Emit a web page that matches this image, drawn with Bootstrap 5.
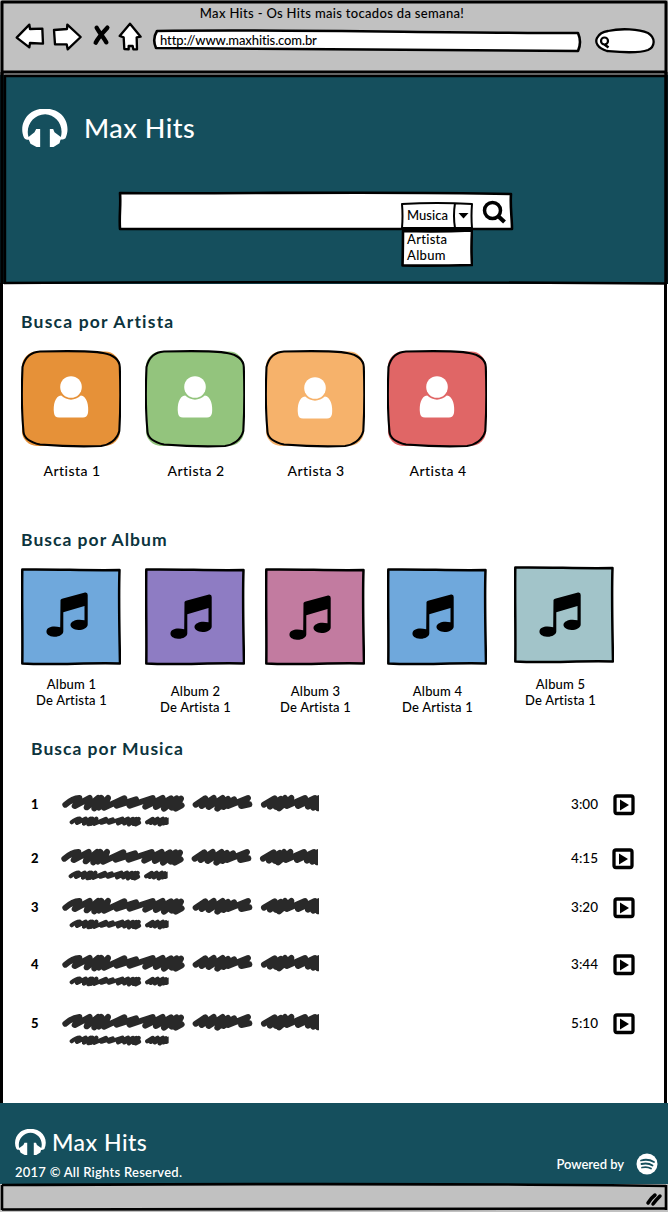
<!DOCTYPE html>
<html lang="pt-br">
<head>
<meta charset="utf-8">
<title>Max Hits</title>
<meta name="viewport" content="width=device-width, initial-scale=1">
<link href="https://cdn.jsdelivr.net/npm/bootstrap@5.3.0/dist/css/bootstrap.min.css" rel="stylesheet">
<style>
body{font-family:Lato,"Open Sans",sans-serif;color:#000;font-size:13px;line-height:16px;font-weight:500;background:#fff}
svg{display:block;flex:none}
.browser{width:668px;height:1212px;overflow:hidden}
.sketch{position:absolute;inset:0;fill:none;stroke:#000;stroke-width:2.6;stroke-linejoin:round;pointer-events:none}
.topbar{height:75px;background:#c1c1c1}
.topbar .caption{height:20px;padding-top:5px;padding-right:4px;letter-spacing:.32px}
.tools{padding-left:14px}
.address{width:430px;height:24px;margin:9px 0 0 8px;padding:3px 0 0 8px;letter-spacing:-.12px}
.address span,.picker span,.options span{position:relative}
.quick{margin:8px 0 0 12px}
.hero{height:209px;background:#154f5d;color:#fff;padding:34px 0 0 22px}
.brand{font-size:27px;line-height:38px;letter-spacing:.5px}
.search{width:396px;height:40px;margin:44px 0 0 96px;padding-left:283px;color:#000}
.picker{width:72px;height:28px;margin-top:11px;padding:5px 0 0 6px;letter-spacing:.05px}
.options{position:absolute;left:283px;top:38px;width:72px;height:38px;padding:2px 0 0 6px;letter-spacing:.3px}
.glass{margin:9px 0 0 9px}
.title{color:#0c343d;font-size:17.5px;line-height:22px;font-weight:700;letter-spacing:1.2px;margin:0}
.albums .title,.songs .title{letter-spacing:1.02px}
.artists{padding:27px 0 0 21px;height:218px}
.albums{padding:27px 0 0 21px;height:210px}
.tile{width:100px;text-align:center}
.tiles{margin-top:17px}
.artists .tile div{font-size:14px;letter-spacing:.45px;padding-left:2px;margin-top:15px}
.albums .tile div{letter-spacing:.18px;margin-top:10px;padding-left:1px}
.albums .tile .low{margin-top:17px}
.g20{margin-left:20px}.g22{margin-left:22px}.g24{margin-left:24px}.g27{margin-left:27px}
.songs{padding:26px 0 0 31px;height:391px;position:relative}
.song{width:604px;height:32px;letter-spacing:.05px}
.song .num{width:31px;font-weight:900;font-size:13px;padding-top:2px}
.song .time{width:42px;margin-left:251px;font-size:13.5px;padding-top:2px}
.footer-bar{height:81px;background:#154f5d;color:#fff;padding:0 10px 0 15px}
.footer-bar .brand{font-size:23px;line-height:28px;letter-spacing:.5px;margin-left:6px}
.copyright{letter-spacing:.25px;font-weight:600;margin-top:8px}
.powered{margin-top:42px;height:38px;font-weight:600;letter-spacing:-.05px}
.status{height:28px;background:#c1c1c1}
</style>
</head>
<body>
<svg width="0" height="0" class="position-absolute">
<defs>
<symbol id="phones" viewBox="68 42 137 114"><path fill="#fff" d="M74 129C62 104 69 74 90 56C116 35 156 36 181 55C204 73 210 104 198 130C193 134 187 134 183 134L180 145L162 156L151 156L151 102L161 102L165 112L184 126C194 91 169 59 137 58C102 58 77 93 87 126L105 112L110 102L122 102L122 156L111 156L93 146L88 134C82 134 78 134 74 129Z"/></symbol>
<symbol id="person" viewBox="0 0 36 42"><circle cx="18" cy="11" r="10.800" fill="#fff"/><path fill="#fff" d="M8.200 19.500C14 25 22 25 27.800 19.500C34 20 36 30 35 37Q34 41.500 30 41.500H6Q1.500 41.500 1 37C0 29 2 20 8.200 19.500Z"/></symbol>
<symbol id="notes" viewBox="0 0 42 46"><path d="M14.500 8Q15 7 16 6.700L39 .5Q41.700 0 41.700 3V32.500C41.700 36 37 38 32.500 38C28 37.800 24 35.500 24.500 32.500C25 29 31 26.500 38.500 28.300V14L17.300 20.200V39.500C17 43 12.500 45 8 44.700C3 44.500 0 42 .5 39C1 35 7 33.500 14.200 35.300Z"/></symbol>
<symbol id="roundbox" viewBox="0 0 100 98"><rect x="1" y="1.500" width="98" height="94.500" rx="15" fill="currentColor"/><path fill="none" stroke="#000" stroke-width="2.100" d="M19 1.500C47 .8 72 1 82 3C93 5 98.500 10 98.800 17C99.500 37 99.500 60 98.300 81C96 90 88 95 80 96C55 97 38 96 19 94.500C8 92 3 87 2.500 82C.5 61 .5 39 1.500 17C4 7 10 2 19 1.500Z"/></symbol>
<symbol id="squarebox" viewBox="0 0 100 98"><path fill="currentColor" stroke="#000" stroke-width="2.500" stroke-linejoin="round" d="M1.300 1.500C34 .8 65 2.800 98.500 2C97.500 33 98.500 64 99 95.500C66 94.500 33 97.300 1.300 95.500C1.700 64 .8 33 1.300 1.500Z"/></symbol>
<clipPath id="subclip"><rect x="140" y="235" width="306" height="45"/></clipPath>
<path id="w1" d="M136 207Q158 188 178 187L164 211L209 187L200 215L234 187L223 218L244 187L236 216L264 187L252 216L313 188L290 210L348 191L329 210L398 187L376 213L428 187L408 214L453 188L432 219L470 188L455 216L483 189L467 219L485 209"/>
<path id="w2" d="M527 207L556 188L545 211L581 187L566 214L608 187L592 219L624 190L610 214L642 191L624 211L684 187L664 211L688 206"/>
<path id="w3" d="M732 207L764 188L750 213L782 190L768 214L795 187L777 218L814 187L800 211L855 187L834 211L885 187L864 213L898 187L880 216L910 187L894 218L910 207"/>
<symbol id="scribble" viewBox="126 175 771 99"><g fill="none" stroke="#292929" stroke-width="18" stroke-linecap="round" stroke-linejoin="round"><use href="#w1"/><use href="#w2"/><use href="#w3"/><g clip-path="url(#subclip)"><g transform="translate(76 146) scale(.58 .55)" stroke-width="22"><use href="#w1"/><use href="#w2"/></g></g></g></symbol>
<symbol id="play" viewBox="0 0 22 22"><rect x="2" y="2" width="18" height="17.500" rx="2" fill="#fff" stroke="#000" stroke-width="3.300"/><path d="M7 5.500V16.500L16 11Z"/></symbol>
</defs>
</svg>
<div class="browser position-relative d-flex flex-column">
  <header class="topbar">
    <div class="caption text-center">Max Hits - Os Hits mais tocados da semana!</div>
    <div class="tools d-flex">
      <svg width="130" height="32" viewBox="42 60 390 96" fill="#fff" stroke="#000" stroke-width="7" stroke-linejoin="round"><path d="M50 113L88 74L90 87L127 86L129 131L90 129L88 142Z"/><path d="M162 90L201 87L202 74L242 111L203 148L200 133L165 133Z"/><path d="M290 83C298 98 310 112 319 127M322 83C308 98 294 114 287 128" stroke-width="13" stroke-linecap="round" fill="none"/><path d="M390 71L359 108L371 112L373 147L386 148V138H398L400 148H411L410 112L422 110Z"/></svg>
      <div class="address position-relative"><svg class="sketch" width="430" height="24"><path fill="#fff" d="M5 2C140 0 280 4 426 4Q430 13 426 22C280 20 150 21 4 19Q0 10 5 2Z"/></svg><span>http://www.maxhitis.com.br</span></div>
      <svg class="quick" width="62" height="26"><path d="M14 3C27 0 45 1 54 5C62 10 61 19 54 22C43 26 24 24 13 23C3 20 1 14 3 10Q6 4 14 3Z" fill="#fff" stroke="#000" stroke-width="2.300"/><circle cx="10.500" cy="13" r="3.500" fill="none" stroke="#000" stroke-width="2.200"/><path d="M10.500 16.500L14.500 19.500" stroke="#000" stroke-width="2.600"/></svg>
    </div>
  </header>
  <section class="hero">
    <div class="d-flex align-items-center"><svg width="46" height="38"><use href="#phones"/></svg><div class="brand ms-3">Max Hits</div></div>
    <div class="search position-relative d-flex">
      <svg class="sketch" width="396" height="40"><path fill="#fff" d="M2 2C130 3 260 0 393 3C392 15 394 27 394 38C260 37 130 39 2 38C1 25 3 14 2 2Z"/></svg>
      <div class="picker position-relative"><svg class="sketch" width="72" height="28"><path fill="#fff" stroke-width="2" d="M1 2Q36 0 71 2Q70 14 71 26Q36 26 1 26Q2 14 1 2ZM54 1Q52 14 54 26"/><path d="M57.500 11H67.500L62.500 16.500Z" fill="#000" stroke="none"/></svg><span>Musica</span></div>
      <svg class="glass position-relative" width="26" height="26" fill="none" stroke="#000"><circle cx="10.500" cy="10.500" r="8" stroke-width="3.500"/><path d="M16 16L22.500 22" stroke-width="4.200"/></svg>
      <div class="options"><svg class="sketch" width="72" height="38"><path fill="#fff" d="M2 2Q36 3 71 1.500Q70 19 71 36Q36 37 1.500 36.500Q2 18 2 2Z"/></svg><span>Artista<br>Album</span></div>
    </div>
  </section>
  <section class="artists">
    <h2 class="title">Busca por Artista</h2>
    <div class="d-flex tiles">
      <div class="tile"><svg width="100" height="98" color="#e69138"><use href="#roundbox"/><use href="#person" x="32" y="26" width="36" height="42"/></svg><div>Artista 1</div></div>
      <div class="tile g24"><svg width="100" height="98" color="#93c47d"><use href="#roundbox"/><use href="#person" x="32" y="26" width="36" height="42"/></svg><div>Artista 2</div></div>
      <div class="tile g20"><svg width="100" height="98" color="#f6b26b"><use href="#roundbox"/><use href="#person" x="32" y="27" width="36" height="42"/></svg><div>Artista 3</div></div>
      <div class="tile g22"><svg width="100" height="98" color="#e06666"><use href="#roundbox"/><use href="#person" x="32" y="26" width="36" height="42"/></svg><div>Artista 4</div></div>
    </div>
  </section>
  <section class="albums">
    <h2 class="title">Busca por Album</h2>
    <div class="d-flex tiles">
      <div class="tile"><svg width="100" height="98" color="#6fa8dc"><use href="#squarebox"/><use href="#notes" x="25" y="24" width="42" height="46"/></svg><div>Album 1<br>De Artista 1</div></div>
      <div class="tile g24"><svg width="100" height="98" color="#8e7cc3"><use href="#squarebox"/><use href="#notes" x="25" y="26" width="42" height="46"/></svg><div class="low">Album 2<br>De Artista 1</div></div>
      <div class="tile g20"><svg width="100" height="98" color="#c27ba0"><use href="#squarebox"/><use href="#notes" x="24" y="27" width="42" height="46"/></svg><div class="low">Album 3<br>De Artista 1</div></div>
      <div class="tile g22"><svg width="100" height="98" color="#6fa8dc"><use href="#squarebox"/><use href="#notes" x="25" y="26" width="42" height="46"/></svg><div class="low">Album 4<br>De Artista 1</div></div>
      <div class="tile g27" style="margin-top:-2px"><svg width="100" height="98" color="#a2c4c9"><use href="#squarebox"/><use href="#notes" x="25" y="26" width="42" height="46"/></svg><div class="pe-2" style="margin-top:12px">Album 5<br>De Artista 1</div></div>
    </div>
  </section>
  <section class="songs">
    <h2 class="title">Busca por Musica</h2>
    <div class="song d-flex" style="margin-top:34px"><div class="num">1</div><svg width="258" height="33"><use href="#scribble" width="257" height="33"/></svg><div class="time">3:00</div><svg width="22" height="22"><use href="#play" width="22" height="22"/></svg></div>
    <div class="song d-flex" style="margin-top:22px"><div class="num">2</div><svg width="258" height="33" overflow="visible"><use href="#scribble" x="-1" width="257" height="33"/></svg><div class="time">4:15</div><svg width="22" height="22" overflow="visible"><use href="#play" x="-1" width="22" height="22"/></svg></div>
    <div class="song d-flex" style="margin-top:17px"><div class="num">3</div><svg width="258" height="33"><use href="#scribble" width="257" height="33"/></svg><div class="time">3:20</div><svg width="22" height="22"><use href="#play" width="22" height="22"/></svg></div>
    <div class="song d-flex" style="margin-top:25px"><div class="num">4</div><svg width="258" height="33"><use href="#scribble" width="257" height="33"/></svg><div class="time">3:44</div><svg width="22" height="22"><use href="#play" width="22" height="22"/></svg></div>
    <div class="song d-flex" style="margin-top:27px"><div class="num">5</div><svg width="258" height="33"><use href="#scribble" width="257" height="33"/></svg><div class="time">5:10</div><svg width="22" height="22"><use href="#play" width="22" height="22"/></svg></div>
  </section>
  <footer class="footer-bar d-flex justify-content-between position-relative">
    <div style="padding-top:25px"><div class="d-flex align-items-center"><svg width="31" height="26"><use href="#phones"/></svg><div class="brand">Max Hits</div></div><div class="copyright">2017 © All Rights Reserved.</div></div>
    <div class="powered d-flex align-items-center"><span>Powered by</span><svg style="margin-left:10px" width="24" height="24"><circle cx="13" cy="12" r="10.500" fill="#fff"/><path d="M7 8.500Q14 6.500 20 10M7.500 12Q14 10.500 18.500 13.500M8 15.500Q13 14.200 17 16.500" fill="none" stroke="#154f5d" stroke-width="1.800" stroke-linecap="round"/></svg></div>
  </footer>
  <div class="status"></div>
  <svg class="sketch" width="668" height="1212"><path d="M2 72V2H666V72" stroke-width="3"/><path d="M2 72H666" stroke-width="3"/><path d="M3 74.300H664" stroke="#777" stroke-width="1"/><path d="M2 72V284M666 72V284" stroke-width="3.500"/><path d="M5 284V76H666M4 283Q330 281 666 283.500" stroke-width="2.400"/><path d="M1.500 283V1103M665.500 283V1103" stroke-width="3"/><path d="M2 1210V1185M666 1185V1210"/><path d="M2 1185C200 1184 450 1183 666 1186M2 1209.500C220 1208 440 1210 666 1208.500" stroke-width="2.600"/><path d="M648 1203Q651 1198 655 1195M653 1204Q656 1200 660 1196" stroke-width="3.500" stroke-linecap="round"/></svg>
</div>
<script src="https://cdn.jsdelivr.net/npm/bootstrap@5.3.0/dist/js/bootstrap.bundle.min.js"></script>
</body>
</html>
